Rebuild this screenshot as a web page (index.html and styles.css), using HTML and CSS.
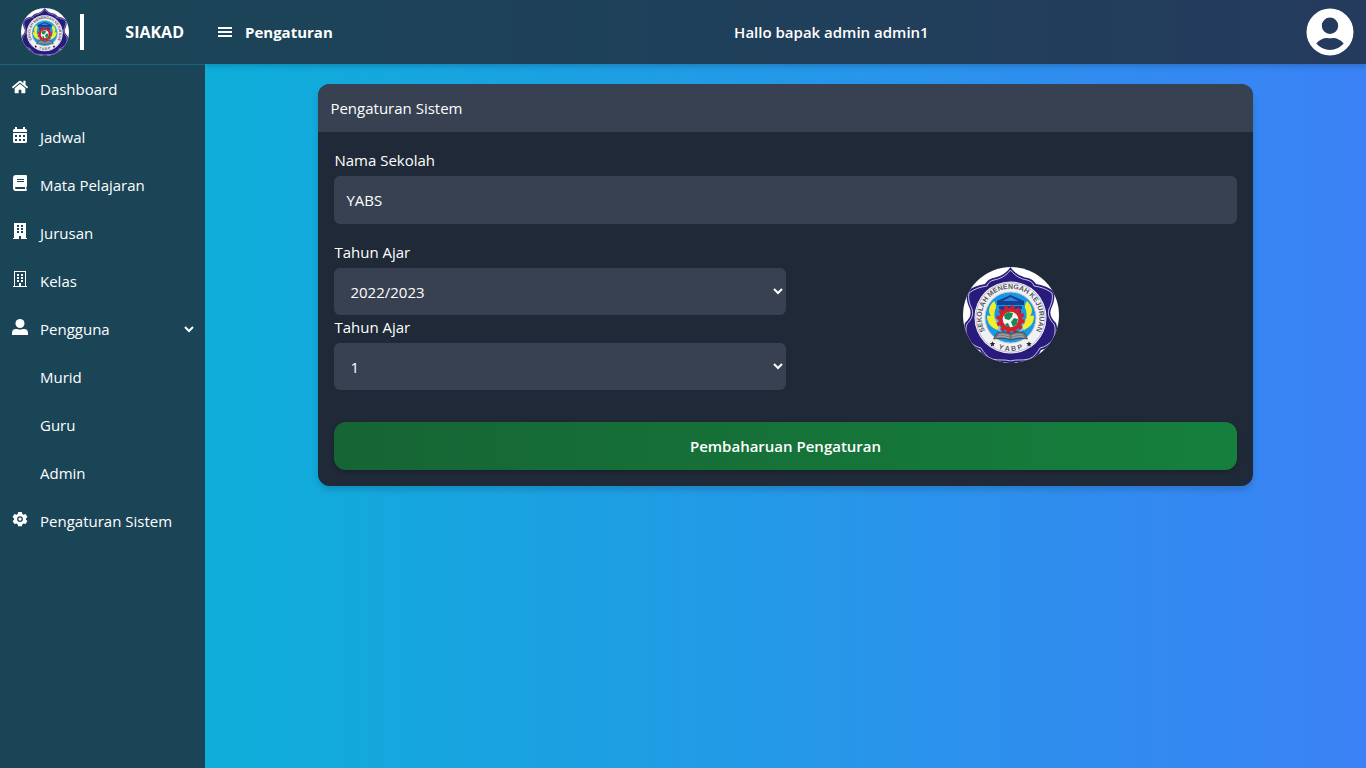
FILE: index.html
```html
<!DOCTYPE html>
<html lang="id">
<head>
<meta charset="utf-8">
<meta name="viewport" content="width=device-width, initial-scale=1">
<title>SIAKAD - Pengaturan</title>
<link rel="stylesheet" href="styles.css">
</head>
<body>
<div class="app">
  <aside class="sidebar">
    <div class="brand">
      <svg class="brand-logo" viewBox="0 0 96 96" role="img" aria-label="Logo sekolah"><use href="#emblem"/></svg>
      <span class="brand-line"></span>
      <span class="brand-name">SIAKAD</span>
    </div>
    <nav class="menu">
      <a href="#" class="item"><svg class="icon" viewBox="0 0 576 512"><path d="M280.370 148.260L96 300.110V464a16 16 0 0 0 16 16l112.060-.29a16 16 0 0 0 15.920-16V368a16 16 0 0 1 16-16h64a16 16 0 0 1 16 16v95.640a16 16 0 0 0 16 16.050L464 480a16 16 0 0 0 16-16V300L295.670 148.260a12.190 12.190 0 0 0-15.300 0zM571.600 251.470L488 182.560V44.050a12 12 0 0 0-12-12h-56a12 12 0 0 0-12 12v72.610L318.470 43a48 48 0 0 0-61 0L4.340 251.470a12 12 0 0 0-1.600 16.900l25.500 31A12 12 0 0 0 45.150 301l235.220-193.740a12.190 12.190 0 0 1 15.300 0L530.900 301a12 12 0 0 0 16.900-1.600l25.500-31a12 12 0 0 0-1.700-16.930z"/></svg>Dashboard</a>
      <a href="#" class="item"><svg class="icon" viewBox="0 0 16 16"><path fill-rule="evenodd" d="M3 0h2v2h6V0h2v2h1l1 1v2H1V3l1-1h1zM1 6h14v9l-1 1H2l-1-1zm2 2v2h2V8zm4 0v2h2V8zm4 0v2h2V8zm-8 4v2h2v-2zm4 0v2h2v-2zm4 0v2h2v-2z"/></svg>Jadwal</a>
      <a href="#" class="item"><svg class="icon" viewBox="0 0 16 16"><path fill-rule="evenodd" d="M4 0h10q1 0 1 1v10q0 .7-.6 1-.3 1 0 2 .6.300.6 1t-1 1H4q-3 0-3-3V3q0-3 3-3zm1 4v1h7V4zm0 2v1h7V6zM4 12q-1 0-1 1t1 1h9v-2z"/></svg>Mata Pelajaran</a>
      <a href="#" class="item"><svg class="icon" viewBox="0 0 16 16"><path fill-rule="evenodd" d="M2 0h12v15h1v1H9v-3H7v3H1v-1h1zm3 2v2h2V2zm4 0v2h2V2zM5 5v2h2V5zm4 0v2h2V5zM5 8v2h2V8zm4 0v2h2V8z"/></svg>Jurusan</a>
      <a href="#" class="item"><svg class="icon" viewBox="0 0 16 16"><path fill-rule="evenodd" d="M2 0h12v15h1v1H1v-1h1zm1 1v14h4v-3h2v3h4V1z"/><path d="M5 3h2v2H5zm4 0h2v2H9zM5 6h2v2H5zm4 0h2v2H9zM5 9h2v2H5zm4 0h2v2H9z"/></svg>Kelas</a>
      <button type="button" class="item"><svg class="icon" viewBox="0 0 16 16"><circle cx="8" cy="4.500" r="4.500"/><path d="M0 16v-2q0-4 4-4h1q3 1 6 0h1q4 0 4 4v2z"/></svg>Pengguna<svg class="chevron" viewBox="0 0 10 8"><path d="M1 2l4 4 4-4"/></svg></button>
      <a href="#" class="item sub">Murid</a>
      <a href="#" class="item sub">Guru</a>
      <a href="#" class="item sub">Admin</a>
      <a href="#" class="item"><svg class="icon" viewBox="0 0 16 16"><path fill-rule="evenodd" d="M6.200 1h3.600l.5 2 1.300.7 2-.6 1.800 3L14 7.500v1.300l1.400 1.300-1.800 3-2-.5-1.200.7-.6 1.900H6.200l-.6-1.900-1.200-.7-2 .5-1.800-3L2 8.800V7.500L.6 6.100l1.800-3 2 .6L5.700 3zM8 5.200a2.900 2.900 0 1 0 0 5.800 2.900 2.900 0 0 0 0-5.800zm0 1.300a1.600 1.600 0 1 1 0 3.200 1.600 1.600 0 0 1 0-3.200z"/></svg>Pengaturan Sistem</a>
    </nav>
  </aside>

  <div class="page">
    <header class="topbar">
      <div class="title">
        <button type="button" class="toggle" aria-label="Menu"><svg viewBox="0 0 14 12"><path d="M0 1h14v2H0zM0 5h14v2H0zM0 9h14v2H0z"/></svg></button>
        <h1>Pengaturan</h1>
      </div>
      <p class="hello">Hallo bapak admin admin1</p>
      <button type="button" class="avatar" aria-label="Akun"><svg viewBox="0 0 48 48"><path fill-rule="evenodd" d="M24 .5a23.500 23.500 0 1 0 0 47 23.500 23.500 0 0 0 0-47zM24 9.500a8.200 8.200 0 1 1 0 16.400 8.200 8.200 0 0 1 0-16.400zM10.300 35.500Q15 30 21 30q3 .5 6 0 6 0 10.700 5.500Q32 42 24 42t-13.700-6.500z"/></svg></button>
    </header>
    <main class="content">
      <form class="card">
        <h2 class="card-title">Pengaturan Sistem</h2>
        <div class="card-body">
          <div class="field">
            <label for="nama">Nama Sekolah</label>
            <input id="nama" type="text" value="YABS">
          </div>
          <div class="columns">
            <div>
              <div class="field">
                <label for="tahun">Tahun Ajar</label>
                <select id="tahun"><option>2022/2023</option></select>
              </div>
              <div class="field">
                <label for="semester">Tahun Ajar</label>
                <select id="semester"><option>1</option><option>2</option></select>
              </div>
            </div>
            <svg class="school-logo" viewBox="0 0 96 96" role="img" aria-label="Logo sekolah">
              <defs>
                <clipPath id="round"><circle cx="48" cy="48" r="48"/></clipPath>
                <path id="arc-top" d="M26.300 70A28.800 28.800 0 1 1 68.700 70"/>
                <path id="arc-bottom" d="M20 69.500A33.500 33.500 0 0 0 75 69.500"/>
                <path id="star" d="M0-2.800L.8-.9 2.800-.8 1.200.5 1.700 2.500 0 1.400-1.700 2.500-1.200.5-2.800-.8-.8-.9z"/>
              </defs>
              <g id="emblem" clip-path="url(#round)">
                <rect width="96" height="96" fill="#fff"/>
                <path fill="#291b7b" d="M47.500 0C43 7 36 10 30 11 26 12 24 14 22 17 16 18 9 20 4 25 3 31 4 36 7 42 9 48 6 52 2 56 0 61 1 68 3 74 8 79 12 82 17 83 19 88 22 92 28 94 36 96 42 94 47.500 97 53 94 59 96 67 94 73 92 76 88 78 83 83 82 87 79 92 74 94 68 95 61 93 56 89 52 86 48 88 42 91 36 92 31 91 25 86 20 79 18 73 17 71 14 69 12 65 11 59 10 52 7 47.500 0z"/>
                <path fill="none" stroke="#dedbef" stroke-width=".9" d="M47.500 3C43 9 37 12 31 13 27 14 25 16 24 19 17 20 11 22 6 26 5 31 6 36 9 42 11 48 8 53 4 57 2 62 3 67 5 73 9 77 13 80 18 81 21 86 24 90 29 92 36 94 42 92 47.500 94 53 92 59 94 66 92 71 90 74 86 77 81 82 80 86 77 90 73 92 67 93 62 91 57 87 53 84 48 86 42 89 36 90 31 89 26 84 22 78 20 71 19 70 16 68 14 64 13 58 12 52 9 47.500 3z"/>
                <circle cx="47.500" cy="50.500" r="36" fill="#fff"/>
                <circle cx="47.500" cy="50.500" r="34.800" fill="#f1f1f4" stroke="#8c86b6" stroke-width=".6"/>
                <circle cx="47.500" cy="50.500" r="25.500" fill="#1599e4" stroke="#c3c1d2"/>
                <path fill="#b9dff5" opacity=".6" d="M25 49a23 23 0 0 0 45 0l-8 3-7 15H40l-6-15z"/>
                <g class="emblem-text">
                  <text><textPath href="#arc-top" startOffset="50%" text-anchor="middle">SEKOLAH MENENGAH KEJURUAN</textPath></text>
                  <text><textPath href="#arc-bottom" startOffset="50%" text-anchor="middle">Y A B P</textPath></text>
                </g>
                <use href="#star" x="29.500" y="77" fill="#222"/>
                <use href="#star" x="66" y="77" fill="#222"/>
                <path fill="#173f94" d="M47.500 28L61 34v4H34v-4zM36 39h23v3H36zM37 42h4v13h-4zM54 42h4v13h-4z"/>
                <path fill="#2a86d8" d="M47.500 30l8 4h-16z"/>
                <path fill="#f2ee2a" d="M31 34c-6 6-6 11-3 15-4-1-4-1-4 2 1 6 4 9 10 12l2-3c-5-6-5-12-4-17 2-3 1-6-1-9zM64 34c6 6 6 11 3 15 4-1 4-1 4 2-1 6-4 9-10 12l-2-3c5-6 5-12 4-17-2-3-1-6 1-9z"/>
                <circle cx="47.500" cy="52.500" r="12.800" fill="none" stroke="#d3202b" stroke-width="3" stroke-dasharray="3.700 3"/>
                <circle cx="47.500" cy="52.500" r="9.800" fill="#f6f8f7" stroke="#d3202b" stroke-width="4"/>
                <path fill="#168b55" d="M41 48l4-3 5 1-1 4-3 3-4-1zM48 55l3-4 4 1-1 5-4 3zM42 57l3-1 2 4-3 0z"/>
                <path fill="#777b80" stroke="#35383c" stroke-width=".7" d="M34 66c5-2 10-1 13.500 1 4-2 9-3 14-1l3 6c-6-1-12-1-17 1-5-2-11-2-17-1z"/>
                <path fill="none" stroke="#c6c8c9" stroke-width=".6" d="M36 68c4-1 7 0 10 1M49 69c3-1 7-2 11-1M34 70c5-1 9 0 12 1M49 71c4-1 8-2 12-1"/>
              </g>
            </svg>
          </div>
          <button type="submit" class="submit">Pembaharuan Pengaturan</button>
        </div>
      </form>
    </main>
  </div>
</div>
</body>
</html>
```
FILE: styles.css
```css
*,
*::before,
*::after {
  box-sizing: border-box;
}

body {
  margin: 0;
  color: #fff;
  font: 15px/24px "Segoe UI", "Open Sans", "Noto Sans", sans-serif;
}

h1,
h2,
p {
  margin: 0;
  font-size: inherit;
}

button,
input,
select {
  border: 0;
  color: inherit;
  font: inherit;
}

button {
  padding: 0;
  background: none;
  cursor: pointer;
}

svg {
  display: block;
  flex: none;
  fill: currentColor;
}

.emblem-text {
  fill: #55555c;
  font-family: "Liberation Sans", Arial, sans-serif;
  font-size: 7px;
  font-weight: 700;
}

.app {
  display: flex;
  min-height: 100vh;
  background: linear-gradient(to right, #06b6d4, #3b82f6);
}

.sidebar {
  flex: none;
  width: 205px;
  background: rgb(31 41 55 / 80%);
}

.brand {
  display: flex;
  align-items: center;
  height: 65px;
  padding: 0 21px;
  border-bottom: 1px solid rgb(6 182 212 / 30%);
}

.brand-logo {
  width: 48px;
  height: 48px;
}

.brand-line {
  width: 4px;
  height: 36px;
  margin-left: 11px;
  background: #fff;
}

.brand-name {
  margin-left: auto;
  font-size: 16px;
  font-weight: 700;
}

.item {
  display: flex;
  align-items: center;
  gap: 12px;
  width: 100%;
  height: 48px;
  padding: 0 12px;
  color: inherit;
  text-decoration: none;
}

.sub {
  padding-left: 40px;
}

.icon {
  width: 16px;
  height: 16px;
  margin-bottom: 4px;
}

.chevron {
  width: 10px;
  height: 8px;
  margin-left: auto;
  margin-right: -1px;
  fill: none;
  stroke: currentColor;
  stroke-width: 2;
}

.page {
  display: flex;
  flex: 1;
  flex-direction: column;
  min-width: 0;
}

.topbar {
  display: flex;
  align-items: center;
  justify-content: space-between;
  height: 64px;
  padding: 0 12px;
  background: rgb(31 41 55 / 80%);
  box-shadow: 0 2px 6px rgb(0 0 0 / 20%);
  clip-path: inset(0 0 -12px 0);
}

.title {
  display: flex;
  align-items: center;
  gap: 12px;
  padding-right: 24px;
  font-weight: 700;
}

.toggle svg {
  width: 16px;
  height: 12px;
}

.hello {
  font-weight: 600;
}

.avatar svg {
  width: 48px;
  height: 48px;
}

.content {
  display: flex;
  justify-content: center;
  padding: 20px;
}

.card {
  width: 83.333%;
  overflow: hidden;
  border-radius: 12px;
  background: #1f2937;
  box-shadow: 0 4px 6px rgb(0 0 0 / 15%);
}

.card-title {
  padding: 12px;
  background: #374151;
  font-weight: 400;
}

.card-body {
  padding: 16px;
}

.field {
  display: flex;
  flex-direction: column;
  gap: 4px;
}

.field input,
.field select {
  width: 100%;
  height: 48px;
  padding: 12px;
  border-radius: 6px;
  background: #374151;
}

.field select {
  height: 47px;
  padding: 12px 2px 12px 12px;
}

.columns {
  display: grid;
  grid-template-columns: 1fr 1fr;
  align-items: center;
  margin: 16px 0 32px;
}

.school-logo {
  width: 96px;
  height: 96px;
  justify-self: center;
}

.submit {
  width: 100%;
  height: 48px;
  border-radius: 12px;
  background: linear-gradient(to right, #166534, #15803d);
  box-shadow: 0 2px 4px rgb(0 0 0 / 20%);
  font-weight: 600;
}
```
